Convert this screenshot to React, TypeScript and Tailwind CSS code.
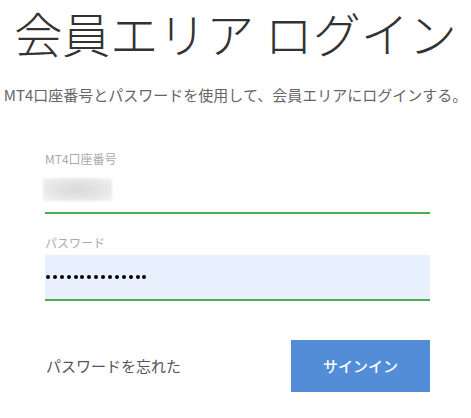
export default function App() {
  const font = { fontFamily: '"Noto Sans CJK JP", "Noto Sans", sans-serif' };
  return (
    <div className="w-[471px] h-[418px] bg-white overflow-hidden" style={font}>
      <h1 className="text-center text-[48px] leading-[60px] font-light text-[#333] pt-[2px]">
        会員エリア ログイン
      </h1>
      <p className="text-center text-[15px] leading-[20px] text-[#666] mt-[23px]">
        MT4口座番号とパスワードを使用して、会員エリアにログインする。
      </p>
      <div className="ml-[45px] w-[385px] mt-[47px]">
        <div className="text-[12px] leading-[14px] text-[#aaa]">MT4口座番号</div>
        <div className="h-[48px] border-b-2 border-[#4caf50] flex items-center">
          <div className="ml-[-2px] w-[69px] h-[23px] bg-[radial-gradient(ellipse_at_center,#d9d9d9_0%,#e6e6e6_55%,#f4f4f4_100%)] blur-[1px]" />
        </div>
        <div className="text-[12px] leading-[14px] text-[#aaa] mt-[22px]">パスワード</div>
        <div className="h-[46px] bg-[#e8f0fe] border-b-2 border-[#4caf50] flex items-center mt-[5px]">
          <div className="flex gap-[2.9px] pl-[1px]">
            {Array.from({ length: 15 }).map((_, i) => (
              <span key={i} className="w-[4px] h-[4px] rounded-full bg-black" />
            ))}
          </div>
        </div>
        <div className="flex items-center justify-between mt-[39px]">
          <span className="text-[15px] text-[#555] pl-[1px]">パスワードを忘れた</span>
          <button className="w-[139px] h-[52px] bg-[#538cd7] text-white text-[15px] font-medium">
            サインイン
          </button>
        </div>
      </div>
    </div>
  );
}
